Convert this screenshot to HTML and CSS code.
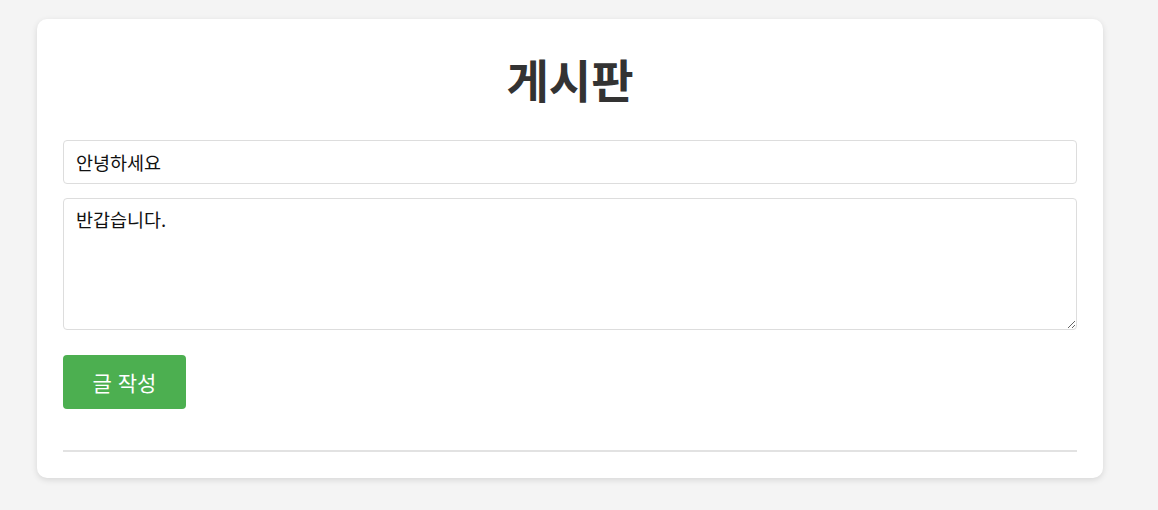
FILE: index.html
```html
<!DOCTYPE html>
<html lang="ko">
<head>
<meta charset="utf-8">
<title>게시판</title>
<link rel="stylesheet" href="styles.css">
</head>
<body>
<div class="card">
  <h1 class="title">게시판</h1>
  <form class="post-form">
    <input class="field" type="text" value="안녕하세요">
    <textarea class="field area">반갑습니다.</textarea>
    <button class="submit" type="button">글 작성</button>
  </form>
  <hr class="divider">
</div>
</body>
</html>
```

FILE: styles.css
```css
html, body {
  margin: 0;
  padding: 0;
}
body {
  background: #f4f4f4;
  padding: 19px 55px 32px 37px;
  font-family: "Noto Sans CJK KR", "Noto Sans", sans-serif;
  color: #333;
}
.card {
  background: #fff;
  border-radius: 10px;
  box-shadow: 0 2px 6px rgba(0, 0, 0, 0.12);
  padding: 35px 26px 26px;
}
.title {
  margin: 0;
  font-size: 46px;
  line-height: 48px;
  font-weight: 700;
  text-align: center;
  color: #333;
}
.post-form {
  display: flex;
  flex-direction: column;
  margin-top: 38px;
}
.field {
  display: block;
  box-sizing: border-box;
  width: 100%;
  border: 1px solid #ddd;
  border-radius: 4px;
  font-family: "Noto Sans CJK KR", sans-serif;
  font-size: 18.5px;
  color: #111;
  padding: 0 12px;
  height: 44px;
  margin: 0 0 14px;
  outline: none;
  background: #fff;
}
.area {
  height: 132px;
  padding: 8px 12px;
  resize: vertical;
  margin-bottom: 25px;
  line-height: 24px;
}
.submit {
  align-self: flex-start;
  width: 123px;
  height: 54px;
  border: none;
  border-radius: 4px;
  background: #4caf50;
  color: #fff;
  font-family: "Noto Sans CJK KR", sans-serif;
  font-size: 21px;
  cursor: pointer;
}
.divider {
  margin: 41px 0 0;
  border: none;
  border-top: 2px solid #e2e2e2;
  height: 0;
}
```
